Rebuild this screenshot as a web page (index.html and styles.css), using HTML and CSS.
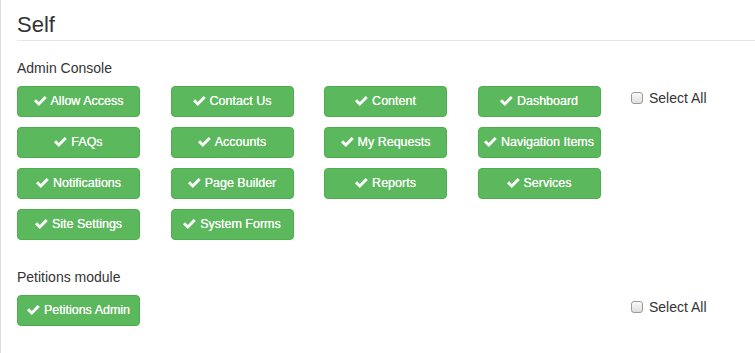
FILE: index.html
```html
<!DOCTYPE html>
<html>
<head>
<meta charset="utf-8">
<link rel="stylesheet" href="styles.css">
</head>
<body>
<div class="panel">
  <h3 class="title">Self</h3>

  <div class="section">
    <div class="label">Admin Console</div>
    <div class="group">
      <div class="buttons">
        <button class="btn"><svg class="ok" viewBox="0 0 13 10"><polygon points="0,5.3 2.1,3.2 4.8,5.9 10.7,0 12.8,2.1 4.8,10"/></svg>Allow Access</button>
        <button class="btn"><svg class="ok" viewBox="0 0 13 10"><polygon points="0,5.3 2.1,3.2 4.8,5.9 10.7,0 12.8,2.1 4.8,10"/></svg>Contact Us</button>
        <button class="btn"><svg class="ok" viewBox="0 0 13 10"><polygon points="0,5.3 2.1,3.2 4.8,5.9 10.7,0 12.8,2.1 4.8,10"/></svg>Content</button>
        <button class="btn"><svg class="ok" viewBox="0 0 13 10"><polygon points="0,5.3 2.1,3.2 4.8,5.9 10.7,0 12.8,2.1 4.8,10"/></svg>Dashboard</button>
        <button class="btn"><svg class="ok" viewBox="0 0 13 10"><polygon points="0,5.3 2.1,3.2 4.8,5.9 10.7,0 12.8,2.1 4.8,10"/></svg>FAQs</button>
        <button class="btn"><svg class="ok" viewBox="0 0 13 10"><polygon points="0,5.3 2.1,3.2 4.8,5.9 10.7,0 12.8,2.1 4.8,10"/></svg>Accounts</button>
        <button class="btn"><svg class="ok" viewBox="0 0 13 10"><polygon points="0,5.3 2.1,3.2 4.8,5.9 10.7,0 12.8,2.1 4.8,10"/></svg>My Requests</button>
        <button class="btn"><svg class="ok" viewBox="0 0 13 10"><polygon points="0,5.3 2.1,3.2 4.8,5.9 10.7,0 12.8,2.1 4.8,10"/></svg>Navigation Items</button>
        <button class="btn"><svg class="ok" viewBox="0 0 13 10"><polygon points="0,5.3 2.1,3.2 4.8,5.9 10.7,0 12.8,2.1 4.8,10"/></svg>Notifications</button>
        <button class="btn"><svg class="ok" viewBox="0 0 13 10"><polygon points="0,5.3 2.1,3.2 4.8,5.9 10.7,0 12.8,2.1 4.8,10"/></svg>Page Builder</button>
        <button class="btn"><svg class="ok" viewBox="0 0 13 10"><polygon points="0,5.3 2.1,3.2 4.8,5.9 10.7,0 12.8,2.1 4.8,10"/></svg>Reports</button>
        <button class="btn"><svg class="ok" viewBox="0 0 13 10"><polygon points="0,5.3 2.1,3.2 4.8,5.9 10.7,0 12.8,2.1 4.8,10"/></svg>Services</button>
        <button class="btn"><svg class="ok" viewBox="0 0 13 10"><polygon points="0,5.3 2.1,3.2 4.8,5.9 10.7,0 12.8,2.1 4.8,10"/></svg>Site Settings</button>
        <button class="btn"><svg class="ok" viewBox="0 0 13 10"><polygon points="0,5.3 2.1,3.2 4.8,5.9 10.7,0 12.8,2.1 4.8,10"/></svg>System Forms</button>
      </div>
      <label class="select-all"><input type="checkbox" class="cb">Select All</label>
    </div>
  </div>

  <div class="section second">
    <div class="label">Petitions module</div>
    <div class="group">
      <div class="buttons">
        <button class="btn"><svg class="ok" viewBox="0 0 13 10"><polygon points="0,5.3 2.1,3.2 4.8,5.9 10.7,0 12.8,2.1 4.8,10"/></svg>Petitions Admin</button>
      </div>
      <label class="select-all"><input type="checkbox" class="cb">Select All</label>
    </div>
  </div>
</div>
</body>
</html>
```

FILE: styles.css
```css
html, body {
  margin: 0;
  padding: 0;
  background: #fff;
}

body {
  font-family: "Liberation Sans", Arial, sans-serif;
  color: #333;
  font-size: 14px;
}

.panel {
  border-left: 1px solid #dddddd;
  padding-left: 16px;
  min-height: 353px;
  box-sizing: border-box;
}

.title {
  margin: 0;
  padding: 13px 0 3px;
  font-size: 22px;
  line-height: 24px;
  font-weight: normal;
  color: #333;
  border-bottom: 1px solid #e5e5e5;
}

.section {
  margin-top: 17px;
}

.section.second {
  margin-top: 27px;
}

.label {
  line-height: 20px;
  margin-bottom: 8px;
}

.group {
  display: flex;
  align-items: flex-start;
}

.buttons {
  display: grid;
  grid-template-columns: repeat(4, 123px);
  column-gap: 30.5px;
  row-gap: 10px;
}

.btn {
  display: flex;
  align-items: center;
  justify-content: center;
  height: 31px;
  box-sizing: border-box;
  padding: 0 4px 2px;
  margin: 0;
  border: 1px solid #4cae4c;
  border-radius: 4px;
  background: #5cb85c;
  color: #fff;
  font-family: "Liberation Sans", Arial, sans-serif;
  font-size: 12.5px;
  white-space: nowrap;
  text-shadow: 0 0 0.6px #fff;
}

.ok {
  width: 13px;
  height: 10px;
  fill: #fff;
  margin-right: 4px;
  flex: none;
}

.select-all {
  display: flex;
  align-items: center;
  margin-left: 30.5px;
  padding-top: 2px;
  line-height: 20px;
  font-size: 14px;
  color: #333;
}

.cb {
  appearance: none;
  -webkit-appearance: none;
  width: 12px;
  height: 12px;
  margin: 0 6px 0 0;
  border: 1px solid #9a9a9a;
  border-radius: 3px;
  background: linear-gradient(#fafafa, #dedede);
  box-sizing: border-box;
}
```
